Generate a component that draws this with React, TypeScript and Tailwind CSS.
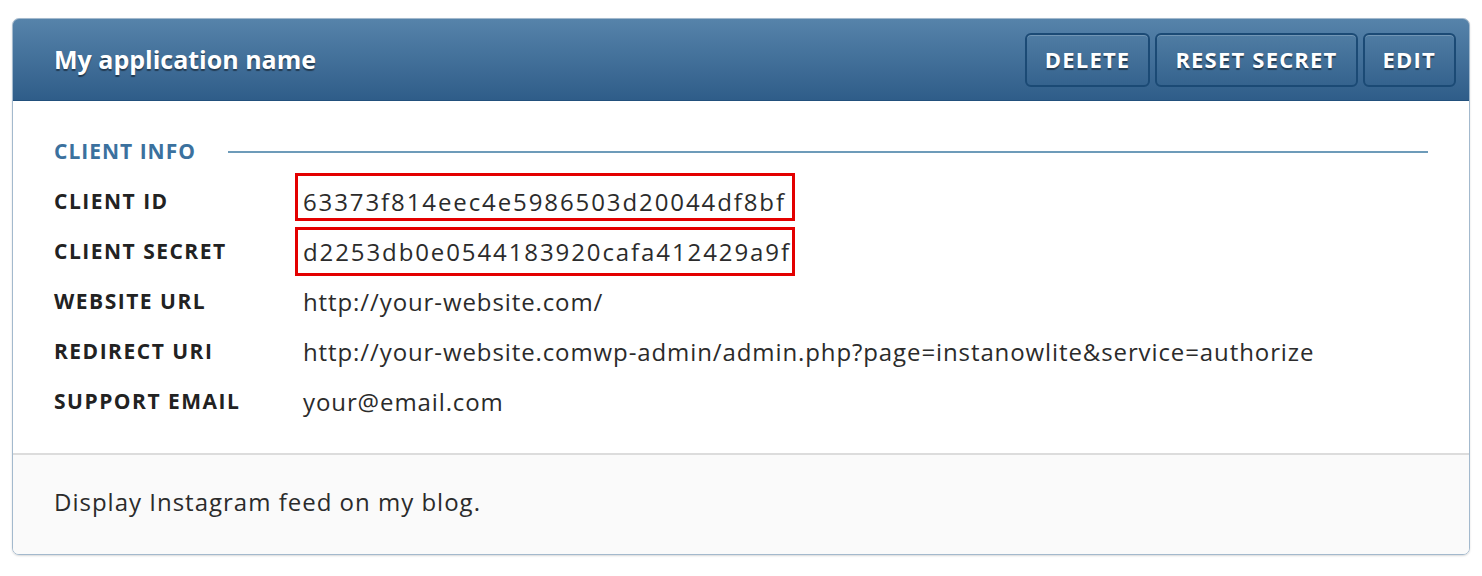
export default function App() {
  const rows = [
    { label: 'CLIENT ID', value: '63373f814eec4e5986503d20044df8bf', mark: 'first' },
    { label: 'CLIENT SECRET', value: 'd2253db0e0544183920cafa412429a9f', mark: 'second' },
    { label: 'WEBSITE URL', value: 'http://your-website.com/' },
    { label: 'REDIRECT URI', value: 'http://your-website.comwp-admin/admin.php?page=instanowlite&service=authorize' },
    { label: 'SUPPORT EMAIL', value: 'your@email.com' },
  ];

  return (
    <div className="w-full min-h-[576px] bg-white pt-[18px] px-[12px] font-['Open_Sans','Noto_Sans',sans-serif]">
      <div className="w-[1458px] rounded-[7px] border border-[#a3b9cd] shadow-[0_1px_2px_rgba(0,0,0,0.15)] overflow-hidden">
        {/* header */}
        <div className="h-[83px] flex items-center justify-between pl-[41px] pr-[13px] bg-gradient-to-b from-[#5683aa] to-[#2f5d89] border border-[#22507c] -m-px mb-0 rounded-t-[7px]">
          <h1 className="text-[25px] font-bold text-white [text-shadow:0_2px_1px_rgba(0,0,0,0.45)]">
            My application name
          </h1>
          <div className="flex gap-[5px]">
            {['DELETE', 'RESET SECRET', 'EDIT'].map((b) => (
              <button
                key={b}
                className="h-[54px] px-[18px] rounded-[6px] border-2 border-[#1b4a75] bg-gradient-to-b from-[#4f7ca3] to-[#35638e] shadow-[inset_0_1px_0_rgba(255,255,255,0.2)] text-white text-[22px] font-bold tracking-[1.2px] [text-shadow:0_2px_1px_rgba(0,0,0,0.45)]"
              >
                {b}
              </button>
            ))}
          </div>
        </div>

        {/* body */}
        <div className="pt-[26px] pb-[26px] pl-[41px] pr-[41px]">
          <div className="h-[50px] flex items-center gap-[32px]">
            <span className="text-[21px] font-bold tracking-[1px] text-[#3b719e] whitespace-nowrap">CLIENT INFO</span>
            <div className="flex-1 h-[2px] bg-[#6d9bb9]" />
          </div>
          {rows.map((r) => (
            <div key={r.label} className="h-[50px] flex items-center">
              <span className="w-[249px] text-[21px] font-bold tracking-[1.5px] text-[#222]">{r.label}</span>
              <span
                className={
                  r.mark
                    ? 'relative text-[24px] tracking-[1.9px] text-[#2b2b2b] whitespace-nowrap'
                    : 'relative text-[24px] tracking-[0.9px] text-[#2b2b2b] whitespace-nowrap'
                }
              >
                {r.value}
                {r.mark === 'first' && (
                  <span className="absolute left-[-8px] top-[-11px] w-[500px] h-[48px] border-[3px] border-[#e30000]" />
                )}
                {r.mark === 'second' && (
                  <span className="absolute left-[-8px] top-[-7px] w-[500px] h-[49px] border-[3px] border-[#e30000]" />
                )}
              </span>
            </div>
          ))}
        </div>

        {/* footer */}
        <div className="h-[101px] border-t-2 border-[#dcdcdc] bg-[#fafafa] flex items-center pl-[41px] pb-[5px]">
          <p className="text-[24px] tracking-[1px] text-[#2b2b2b]">Display Instagram feed on my blog.</p>
        </div>
      </div>
    </div>
  );
}
